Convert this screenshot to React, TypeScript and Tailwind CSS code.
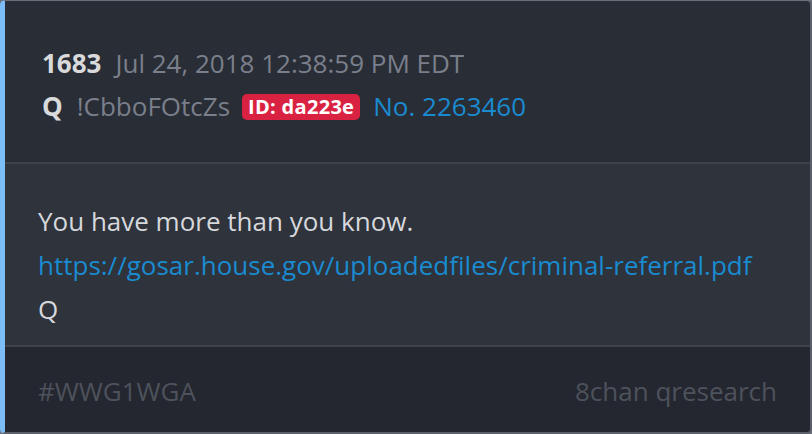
export default function App() {
  return (
    <div className="w-[812px] h-[434px] bg-[#6b707a] font-['Open_Sans',sans-serif]">
      <div className="h-full flex flex-col overflow-hidden rounded-[5px] border-t border-r-2 border-b-2 border-l-[5px] border-t-[#6b707a] border-r-[#5b606a] border-b-[#5b606a] border-l-[#7cbcf7]">
        <div className="h-[161px] bg-[#292d36] pl-[37px] pt-[41px] flex flex-col">
          <div className="flex items-center h-[43px] text-[26px]">
            <span className="font-bold text-[#d9dadc] mr-[14px]">1683</span>
            <span className="text-[#7a7f8b]">Jul 24, 2018 12:38:59 PM EDT</span>
          </div>
          <div className="flex items-center h-[43px] text-[26px]">
            <span className="font-bold text-[#d9dadc] mr-[14px]">Q</span>
            <span className="text-[#7a7f8b] mr-[12px]">!CbboFOtcZs</span>
            <span className="bg-[#d92242] text-white font-bold text-[20px] leading-[26px] tracking-[0.3px] px-[6px] rounded-[5px] mr-[13px]">ID: da223e</span>
            <span className="text-[#1a8bd0]">No. 2263460</span>
          </div>
        </div>
        <div className="h-[2px] bg-[#3d424b]" />
        <div className="h-[181px] bg-[#2e333c] pl-[33px] pt-[35px] text-[26px] leading-[44px] text-[#d6d8dc]">
          <div>You have more than you know.</div>
          <div className="text-[#1a8bd0]">https://gosar.house.gov/uploadedfiles/criminal-referral.pdf</div>
          <div>Q</div>
        </div>
        <div className="h-[2px] bg-[#3d424b]" />
        <div className="flex-1 bg-[#24272f] px-[33px] flex items-center justify-between text-[26px] text-[#4d525c] pt-[3px]">
          <span>#WWG1WGA</span>
          <span>8chan qresearch</span>
        </div>
      </div>
    </div>
  );
}
